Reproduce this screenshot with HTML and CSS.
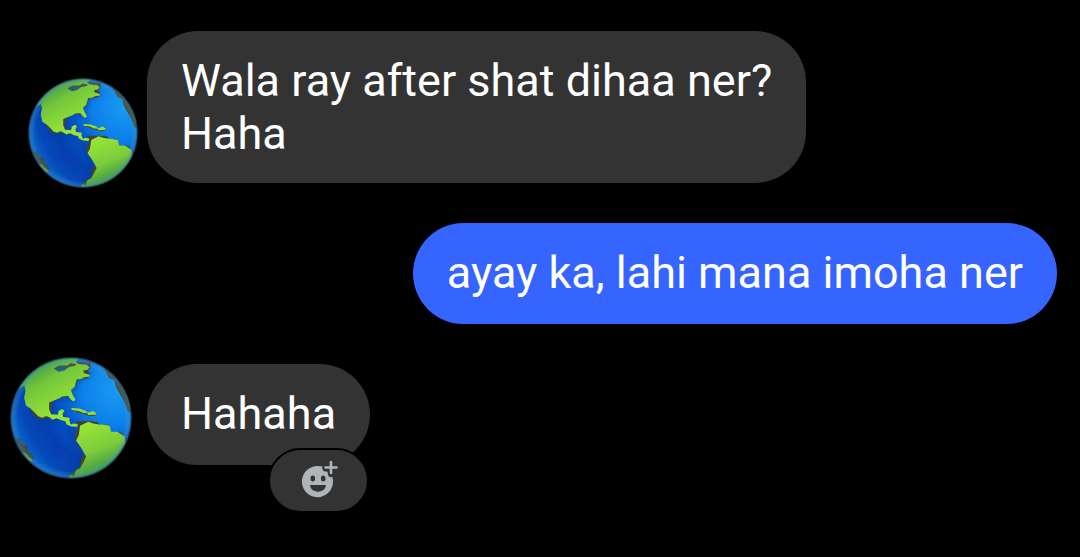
FILE: index.html
```html
<!DOCTYPE html>
<html lang="ceb">
<head>
<meta charset="utf-8">
<title>Chat</title>
<link rel="stylesheet" href="styles.css">
</head>
<body>
<svg class="defs" aria-hidden="true">
  <defs>
    <radialGradient id="sea" gradientUnits="userSpaceOnUse" cx="350" cy="120" r="330">
      <stop offset="0" stop-color="#1a9bf2"/>
      <stop offset=".32" stop-color="#0c80ea"/>
      <stop offset=".52" stop-color="#0656cc"/>
      <stop offset=".72" stop-color="#053fae"/>
      <stop offset=".88" stop-color="#0548b8"/>
      <stop offset="1" stop-color="#0a66cc"/>
    </radialGradient>
    <linearGradient id="north" gradientUnits="userSpaceOnUse" x1="110" y1="40" x2="190" y2="180">
      <stop offset="0" stop-color="#3c9a41"/>
      <stop offset=".4" stop-color="#74c63b"/>
      <stop offset="1" stop-color="#97e436"/>
    </linearGradient>
    <linearGradient id="south" gradientUnits="userSpaceOnUse" x1="265" y1="225" x2="325" y2="370">
      <stop offset="0" stop-color="#97e436"/>
      <stop offset=".5" stop-color="#7ccc3c"/>
      <stop offset="1" stop-color="#2f8b40"/>
    </linearGradient>
    <radialGradient id="rim" gradientUnits="userSpaceOnUse" cx="213" cy="205" r="180">
      <stop offset=".88" stop-color="#5fb0d8" stop-opacity="0"/>
      <stop offset=".96" stop-color="#3f8fc0" stop-opacity=".35"/>
      <stop offset="1" stop-color="#10222e" stop-opacity=".8"/>
    </radialGradient>
    <clipPath id="disc"><circle cx="213" cy="205" r="178"/></clipPath>
    <filter id="soft" x="-10%" y="-10%" width="120%" height="120%"><feGaussianBlur stdDeviation="7"/></filter>
    <symbol id="globe" viewBox="32 24 362 362">
      <circle cx="213" cy="205" r="180" fill="#31566d"/>
      <g clip-path="url(#disc)">
        <circle cx="213" cy="205" r="178" fill="url(#sea)"/>
        <g fill="#063a91" opacity=".4" filter="url(#soft)">
          <path d="M270 62L272 85 238 98 230 120 218 128 228 158 182 150 160 166 166 194 185 184 196 206 230 228 236 262 244 300 256 320 230 378 206 370 240 320 215 270 195 220 112 210 85 170Z"/>
        </g>
        <g fill="#45432e">
          <path d="M223 38L272 40 270 58 262 66 270 72 264 86 232 92 226 112 210 128 224 158 205 142 182 144 158 156 154 186 150 206 114 207 92 184 88 160 84 90 160 40Z"/>
          <path d="M228 214L262 214 292 216 296 224 328 226 331 246 362 248 378 266 340 366 205 374 238 352 244 324 256 306 235 286 223 262 234 230Z"/>
          <path d="M76 110L85 92 91 94 79 122ZM46 266L63 266 66 282 84 288 84 300 104 322 98 332 78 320Z"/>
          <path d="M308 54L324 58 342 80 346 92 362 92 380 122 391 158 393 190 382 186 372 158 358 134 346 112 342 94 326 86Z"/>
          <path d="M213 177L240 178 264 190 286 187 288 197 270 200 242 190 216 183Z"/>
        </g>
        <path fill="#62b63a" d="M60 304L76 309 100 331 92 335 70 320ZM360 93L374 106 388 142 392 184 386 170 374 128Z"/>
        <path fill="url(#north)" d="M40 130L76 108 90 86 75 110 78 124 74 144 79 168 92 176 104 187 116 200 128 204 139 199 149 203 158 210 170 206 184 212 196 215 200 224 214 230 231 231 234 224 221 221 212 224 208 212 209 204 190 202 188 194 193 183 187 178 176 184 174 195 154 194 148 180 148 159 164 152 181 146 184 142 204 139 213 151 221 156 226 150 218 136 213 122 224 112 230 90 243 89 252 84 268 82 269 77 252 72 249 64 262 62 268 55 260 47 236 45 226 38 240 28 200 20 110 30Z"/>
        <path fill="#48534b" d="M162 58L178 49 202 49 212 42 229 45 225 50 207 54 194 63 177 68Z"/>
        <path fill="#1d5f8d" d="M165 60L179 55 203 53 193 61 177 66Z"/>
        <path fill="#8fdf3a" d="M214 175L238 177 258 184 263 191 250 190 235 184 215 181ZM260 190L278 184 288 190 286 195 264 196Z"/>
        <path fill="url(#south)" d="M240 228L252 222 264 216 279 221 296 224 305 224 328 228 332 246 350 246 360 252 373 261 374 278 392 300 350 370 290 390 205 382 210 374 222 376 228 360 240 354 250 336 258 320 249 304 241 290 228 272 236 256Z"/>
      </g>
      <circle cx="213" cy="205" r="180" fill="url(#rim)"/>
    </symbol>
  </defs>
</svg>

<main class="chat">
  <article class="message">
    <svg class="avatar avatar-small" role="img" aria-label="Globe"><use href="#globe"/></svg>
    <p class="bubble">Wala ray after shat dihaa ner?<br>Haha</p>
  </article>

  <article class="message message-own">
    <p class="bubble bubble-own">ayay ka, lahi mana imoha ner</p>
  </article>

  <article class="message">
    <svg class="avatar avatar-large" role="img" aria-label="Globe"><use href="#globe"/></svg>
    <div class="reactable">
      <p class="bubble">Hahaha</p>
      <button class="react" type="button" aria-label="Add reaction">
        <svg class="react-icon" viewBox="0 0 40 40" aria-hidden="true">
          <path fill="#b0b3b8" fill-rule="evenodd" d="M19 5Q22 5 23.500 5.600Q22.500 8.500 25 10.200L28.500 10.800L29 14Q30 17 33.300 15.800A15.600 15.600 0 1 1 19 5ZM13.800 14.500A2.300 3 0 1 0 13.800 20.500A2.300 3 0 1 0 13.800 14.500ZM24.200 14.500A2.300 3 0 1 0 24.200 20.500A2.300 3 0 1 0 24.200 14.500ZM11.500 24Q11 24 11.200 25C12.500 32.500 25.500 32.500 26.800 25Q27 24 26.500 24Z"/>
          <path fill="none" stroke="#b0b3b8" stroke-width="2.600" stroke-linecap="round" d="M32 1V12M26.500 6.500H37.500"/>
        </svg>
      </button>
    </div>
  </article>
</main>
</body>
</html>
```
FILE: styles.css
```css
body {
  margin: 0;
  background: #000;
  color: #fff;
  font-family: Roboto, "Noto Sans", sans-serif;
  font-size: 45px;
  line-height: 53px;
}

.defs {
  position: absolute;
  width: 0;
  height: 0;
}

.chat {
  display: flex;
  flex-direction: column;
  gap: 40px;
  padding: 31px 23px 92px 0;
}

.message {
  display: flex;
  align-items: flex-end;
}

.message-own {
  justify-content: flex-end;
}

.avatar {
  flex: none;
}

.avatar-small {
  width: 110px;
  height: 110px;
  margin: 0 9px -5px 28px;
}

.avatar-large {
  width: 122px;
  height: 122px;
  margin: -7px 15px -14px 10px;
}

.bubble {
  box-sizing: border-box;
  min-height: 101px;
  margin: 0;
  padding: 23px 34px;
  border-radius: 51px;
  background: #333;
}

.bubble-own {
  background: #3664ff;
}

.reactable {
  position: relative;
}

.react {
  position: absolute;
  right: 1px;
  bottom: -48px;
  display: flex;
  align-items: center;
  justify-content: center;
  width: 101px;
  height: 65px;
  padding: 0;
  border: 2px solid #000;
  border-radius: 33px;
  background: #333;
}

.react-icon {
  width: 40px;
  height: 40px;
}
```
